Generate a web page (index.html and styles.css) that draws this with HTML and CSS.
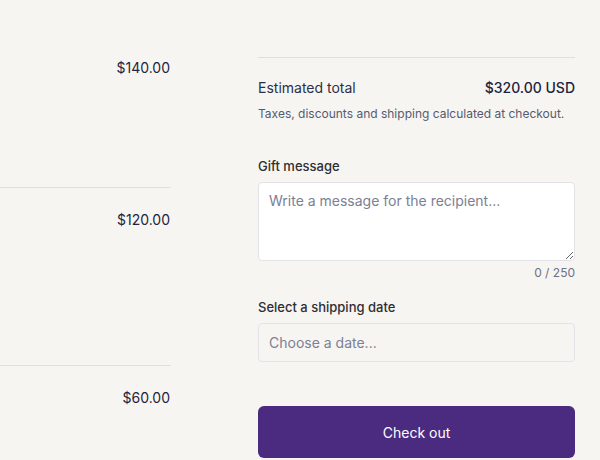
FILE: index.html
```html
<!DOCTYPE html>
<html>
<head>
<meta charset="utf-8">
<link rel="stylesheet" href="styles.css">
</head>
<body>
<div class="page">
  <div class="items">
    <div class="item item-first"><span class="price">$140.00</span></div>
    <div class="item"><span class="price">$120.00</span></div>
    <div class="item"><span class="price">$60.00</span></div>
  </div>
  <div class="summary">
    <div class="total-row">
      <span class="total-label">Estimated total</span>
      <span class="total-value">$320.00 USD</span>
    </div>
    <p class="note">Taxes, discounts and shipping calculated at checkout.</p>
    <label class="field-label gift-label" for="gift">Gift message</label>
    <textarea id="gift" class="gift" placeholder="Write a message for the recipient..."></textarea>
    <div class="counter">0 / 250</div>
    <label class="field-label date-label" for="date">Select a shipping date</label>
    <input id="date" class="date" type="text" placeholder="Choose a date...">
    <button class="checkout">Check out</button>
  </div>
</div>
</body>
</html>
```
FILE: styles.css
```css
html, body {
  margin: 0;
  padding: 0;
  background: #f7f5f2;
  font-family: Inter, "Noto Sans", sans-serif;
}
.page {
  display: flex;
  align-items: flex-start;
  gap: 87px;
  width: 600px;
  height: 460px;
  overflow: hidden;
}
.items {
  width: 171px;
  flex: none;
}
.item {
  height: 178px;
  border-top: 1px solid #e2dfdb;
  padding-top: 21px;
  box-sizing: border-box;
  text-align: right;
  padding-right: 1px;
}
.item-first {
  height: 187px;
  border-top: none;
  padding-top: 57px;
}
.price {
  font-size: 14px;
  line-height: 20px;
  color: #1e2440;
}
.summary {
  width: 317px;
  flex: none;
  margin-top: 57px;
  border-top: 1px solid #e2dfdb;
  padding-top: 20px;
  display: flex;
  flex-direction: column;
}
.summary > * {
  flex: none;
}
.total-row {
  display: flex;
  justify-content: space-between;
  font-size: 14px;
  line-height: 20px;
}
.total-label { color: #2a3048; }
.total-value { color: #1e2440; font-weight: 500; }
.note {
  margin: 7px 0 0;
  font-size: 12px;
  line-height: 18px;
  color: #565b6f;
}
.field-label {
  font-size: 13px;
  line-height: 20px;
  color: #2e2e33;
  font-weight: 500;
}
.gift-label { margin-top: 33px; }
.gift {
  margin-top: 6px;
  height: 79px;
  box-sizing: border-box;
  background: #ffffff;
  border: 1px solid #e3e2e6;
  border-radius: 4px;
  padding: 8px 10px;
  font-family: inherit;
  font-size: 14px;
  line-height: 20px;
  color: #2a3048;
  resize: vertical;
  outline: none;
}
.gift::placeholder, .date::placeholder { color: #7b8094; }
.counter {
  margin-top: 3px;
  text-align: right;
  font-size: 12px;
  line-height: 18px;
  color: #6d7183;
}
.date-label { margin-top: 15px; }
.date {
  margin-top: 6px;
  height: 39px;
  box-sizing: border-box;
  background: #f7f5f2;
  border: 1px solid #e3e2e6;
  border-radius: 4px;
  padding: 0 10px;
  font-family: inherit;
  font-size: 14px;
  color: #2a3048;
  outline: none;
}
.checkout {
  margin-top: 44px;
  height: 52px;
  border: none;
  border-radius: 6px;
  background: #4a2b80;
  color: #ffffff;
  font-family: inherit;
  font-size: 14px;
  cursor: pointer;
}
```
